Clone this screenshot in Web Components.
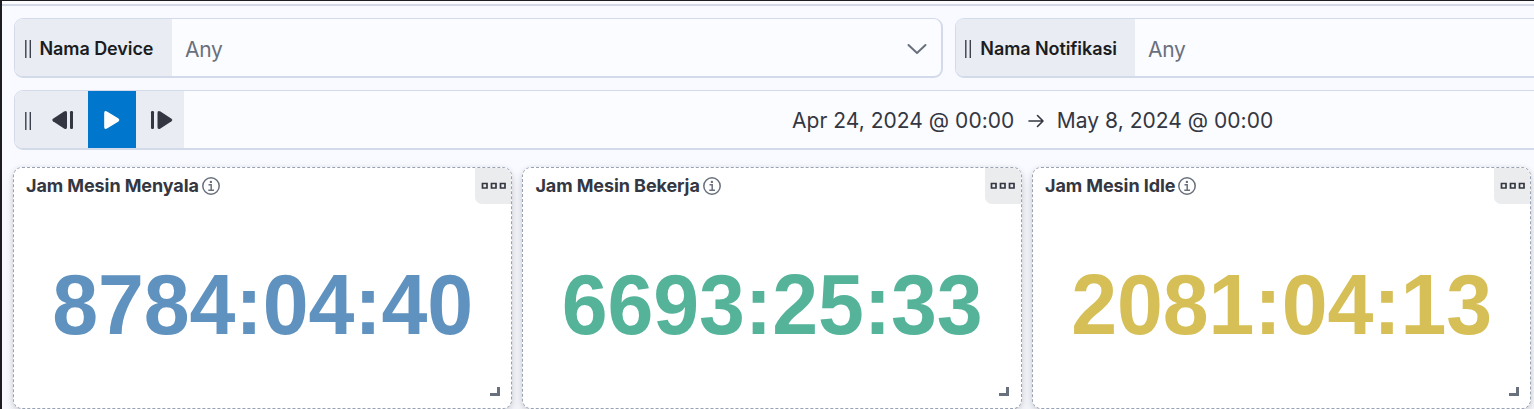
<!DOCTYPE html>
<html lang="id">
<head>
<meta charset="utf-8">
<title>Dashboard</title>
<style>
html,body{margin:0;height:100%;overflow:hidden;background:#f9faff}
body{font-family:Inter,"Liberation Sans",sans-serif;font-optical-sizing:none;letter-spacing:-.005em;color:#343741}
</style>
</head>
<body>
<dash-board></dash-board>
<script>
const define = (name, html) => customElements.define(name, class extends HTMLElement {
  connectedCallback() {
    if (this.shadowRoot) return;
    const t = document.createElement('template');
    t.innerHTML = html;
    this.attachShadow({mode: 'open'}).append(t.content.cloneNode(true));
  }
});

define('drag-grip', `<style>
:host{display:block;flex:none;box-sizing:border-box;width:7px;height:18px}
svg{display:block}
</style><svg width="7" height="18" viewBox="0 0 7 18" fill="#3c404b"><rect x=".1" width="1.400" height="18"/><rect x="4.600" width="1.400" height="18"/></svg>`);

define('option-control', `<style>
:host{display:flex;box-sizing:border-box;height:60px;border:1px solid #d3dae9;border-bottom-width:2px;border-right-width:2px;border-radius:9px;background:#fbfcff;overflow:hidden}
.label{display:flex;align-items:center;box-sizing:border-box;width:var(--label-width);padding:3px 0 0 var(--label-pad,10px);gap:var(--label-gap,7.500px);background:#e9ecf3;color:#1a1c21;font-size:18px;font-weight:600;line-height:24px;white-space:nowrap}
.value{flex:1;padding:17px 0 0 13px;font-size:21px;line-height:27px;letter-spacing:-.3px;color:#69707d}
svg{flex:none;margin:20px 12px 0 0}
</style>
<div class="label"><drag-grip></drag-grip><span><slot></slot></span></div>
<div class="value"><slot name="value"></slot></div>
<svg width="22" height="20" viewBox="0 0 22 20" fill="none" stroke="#69707d" stroke-width="2" stroke-linecap="round" stroke-linejoin="round"><path d="M1.500 6l8.500 8L18.500 6"/></svg>`);

define('time-slider', `<style>
:host{display:flex;box-sizing:border-box;height:60px;border:1px solid #d3dae9;border-bottom-width:2px;border-radius:9px 0 0 9px;background:#fbfcff;overflow:hidden}
.tools{display:flex;align-items:center;flex:none;width:169px;background:#e9ecf3;color:#343741}
drag-grip{margin:3px 8px 0 10px}
button{display:flex;align-items:center;justify-content:center;width:48px;height:57px;padding:0;border:0;background:none;color:inherit}
button.play{background:#0077cc;color:#fff}
.prev svg{margin-left:-3px}
.next svg{margin-left:3px}
.range{display:flex;align-items:center;box-sizing:border-box;padding:2px 0 0 608px;font-size:21px;letter-spacing:.03px;white-space:nowrap}
.range svg{margin:0 11.500px 0 13px}
</style>
<div class="tools"><drag-grip></drag-grip>
<button class="prev" aria-label="Previous"><svg width="24" height="20" viewBox="0 0 24 20" fill="currentColor"><path d="M2 8.700L13 1.600Q16 0 16 3V17Q16 20 13 18.400L2 11.300Q.2 10 2 8.700Z"/><rect x="19" y="1" width="3" height="18" rx="1.200"/></svg></button>
<button class="play" aria-label="Play"><svg width="18" height="20" viewBox="0 0 18 20" fill="currentColor"><path d="M1.200 3Q1.200 0 4 1.400L15.500 8.600Q17.300 10 15.500 11.400L4 18.600Q1.200 20 1.200 17Z"/></svg></button>
<button class="next" aria-label="Next"><svg width="24" height="20" viewBox="0 0 24 20" fill="currentColor"><rect x="1" y="1" width="3" height="18" rx="1.200"/><path d="M21.500 8.700L10.500 1.600Q7.500 0 7.500 3V17Q7.500 20 10.500 18.400L21.500 11.300Q23.300 10 21.500 8.700Z"/></svg></button></div>
<div class="range"><span><slot name="from"></slot></span><svg width="18" height="16" viewBox="0 0 18 16" fill="none" stroke="#343741" stroke-width="1.600" stroke-linecap="round" stroke-linejoin="round"><path d="M2 8h14M10.500 2.500L16 8l-5.500 5.500"/></svg><span><slot name="to"></slot></span></div>`);

define('metric-panel', `<style>
:host{display:flex;flex-direction:column;position:relative;box-sizing:border-box;height:242px;border:1px dashed #98a2b3;border-radius:9px;background:#fff;box-shadow:0 1px 5px rgba(0,0,0,.10),0 4px 9px rgba(0,0,0,.07),0 8px 18px rgba(0,0,0,.06)}
header{display:flex;justify-content:space-between;height:36px}
h2{display:flex;align-items:center;margin:0;height:35px;padding-left:12px;gap:2px;font-size:18px;font-weight:700;letter-spacing:-.09px;white-space:nowrap}
h2 svg{margin-top:1px}
.more{display:flex;align-items:center;justify-content:center;box-sizing:border-box;width:36px;height:36px;padding-left:1px;border-radius:0 8px 0 7px;background:#ebecee}
.num{flex:1;display:flex;justify-content:center;padding-top:53px;font:700 82.500px/92px "Liberation Sans",Arial,sans-serif;letter-spacing:-.120px;color:var(--metric);transform:scaleY(1.035);transform-origin:50% 70px}
.grip{position:absolute;right:11.500px;bottom:12px;width:10px;height:9px;box-sizing:border-box;border:solid #69707d;border-width:0 3px 3px 0}
</style>
<header><h2><span><slot></slot></span><svg width="20" height="20" viewBox="0 0 20 20" fill="none" stroke="#69707d"><circle cx="10" cy="10" r="8.200" stroke-width="1.500"/><path d="M7.500 8.700h2.700v5.600M7.300 14.300h5.700" stroke-width="1.500"/><circle cx="9.900" cy="5.900" r="1.200" fill="#69707d" stroke="none"/></svg></h2>
<div class="more"><svg width="26" height="8" viewBox="0 0 26 8" fill="none" stroke="#343741" stroke-width="1.700"><path d="M1.500 1.500h4.500v4.500H1.500zM10.500 1.500H15v4.500h-4.500zM19.500 1.500H24v4.500h-4.500z"/></svg></div></header>
<div class="num"><slot name="num"></slot></div><div class="grip"></div>`);

define('dash-board', `<style>
:host{display:block;box-sizing:border-box;width:1534px;height:409px;overflow:hidden;border:solid #1d1c21;border-width:1px 0 0 2px;background:#f9faff}
.top{height:3px;background:#fcfcff;border-bottom:2px solid #d3d8e6}
.controls{display:grid;grid-template-columns:929px 929px;gap:12px;padding:12px 0 0 12px}
time-slider{margin:12px -20px 0 12px}
.panels{display:grid;grid-template-columns:499.400px 499.600px 499.400px;gap:10px;padding:17px 0 0 11px}
</style>
<div class="top"></div>
<div class="controls">
<option-control style="--label-width:157px">Nama Device<span slot="value">Any</span></option-control>
<option-control style="--label-width:179px;--label-pad:9px;--label-gap:8.300px">Nama Notifikasi<span slot="value">Any</span></option-control>
</div>
<time-slider><span slot="from">Apr 24, 2024 @ 00:00</span><span slot="to">May 8, 2024 @ 00:00</span></time-slider>
<div class="panels">
<metric-panel style="--metric:#6092c0">Jam Mesin Menyala<span slot="num">8784:04:40</span></metric-panel>
<metric-panel style="--metric:#54b399">Jam Mesin Bekerja<span slot="num">6693:25:33</span></metric-panel>
<metric-panel style="--metric:#d6bf57">Jam Mesin Idle<span slot="num">2081:04:13</span></metric-panel>
</div>`);
</script>
</body>
</html>
